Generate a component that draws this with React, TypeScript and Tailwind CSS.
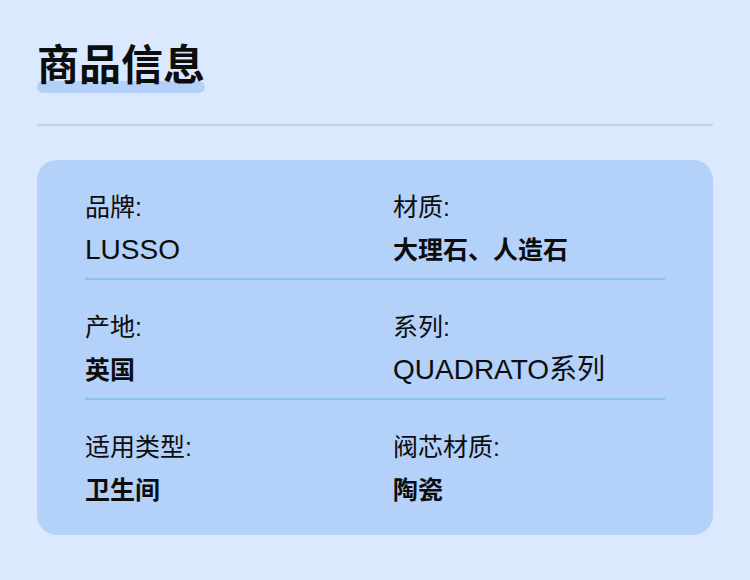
const rows = [
  [
    { label: '品牌:', value: 'LUSSO', bold: false },
    { label: '材质:', value: '大理石、人造石', bold: true },
  ],
  [
    { label: '产地:', value: '英国', bold: true },
    { label: '系列:', value: 'QUADRATO系列', bold: false },
  ],
  [
    { label: '适用类型:', value: '卫生间', bold: true },
    { label: '阀芯材质:', value: '陶瓷', bold: true },
  ],
]

export default function App() {
  return (
    <div
      className="min-h-screen bg-[#dbe9fe] px-[37px] pt-[41px] text-[#0d0d0d]"
      style={{ fontFamily: '"Liberation Sans", "Noto Sans CJK SC", sans-serif' }}
    >
      <div className="relative inline-block">
        <span className="absolute left-0 right-0 top-[40px] h-[12px] rounded-[6px] bg-[#b3d0f8]" />
        <h1 className="relative z-10 text-[42px] font-bold leading-[50px]">商品信息</h1>
      </div>

      <div className="mt-[33px] h-[2px] bg-[#c3d1e2]" />

      <div className="mt-[34px] rounded-[20px] bg-[#b3d1f9] px-[48px] pb-[28px]">
        {rows.map((row, i) => (
          <div
            key={i}
            className={
              'grid grid-cols-[308px_1fr] pt-[31px] ' +
              (i < rows.length - 1 ? 'border-b-2 border-[#8cc2ec] pb-[11px]' : '')
            }
          >
            {row.map(cell => (
              <div key={cell.label}>
                <div className="text-[25px] leading-[32px]">{cell.label}</div>
                <div
                  className={
                    'mt-[10px] leading-[34px] ' +
                    (cell.bold ? 'text-[25px] font-bold' : 'text-[28px]')
                  }
                >
                  {cell.value}
                </div>
              </div>
            ))}
          </div>
        ))}
      </div>
    </div>
  )
}
